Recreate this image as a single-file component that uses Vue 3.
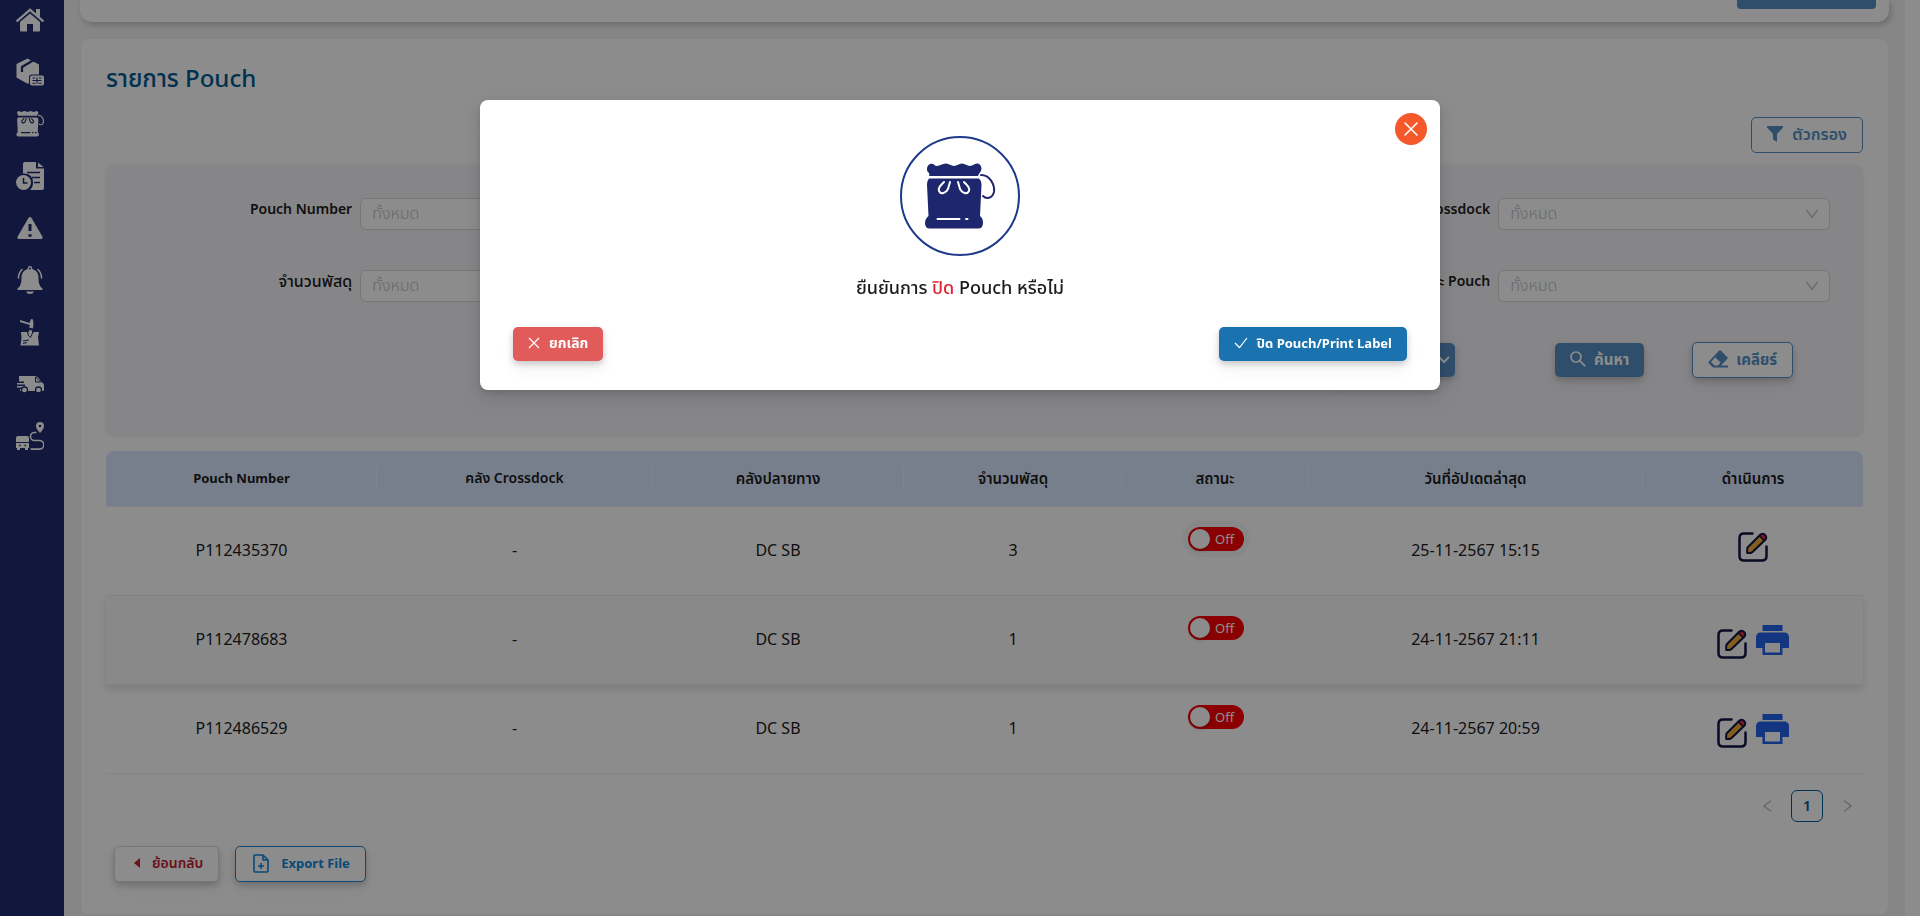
<script setup>
import { ref } from 'vue'

const columns = [
  { label: 'Pouch Number', width: 271, size: 'latin' },
  { label: 'คลัง Crossdock', width: 275, size: 'mixed' },
  { label: 'คลังปลายทาง', width: 252 },
  { label: 'จำนวนพัสดุ', width: 218 },
  { label: 'สถานะ', width: 186 },
  { label: 'วันที่อัปเดตล่าสุด', width: 335 },
  { label: 'ดำเนินการ', width: 220 },
]

const rows = ref([
  { id: 'P112435370', crossdock: '-', dest: 'DC SB', count: 3, updated: '25-11-2567 15:15', on: false, focus: true, print: false },
  { id: 'P112478683', crossdock: '-', dest: 'DC SB', count: 1, updated: '24-11-2567 21:11', on: false, hover: true, print: true },
  { id: 'P112486529', crossdock: '-', dest: 'DC SB', count: 1, updated: '24-11-2567 20:59', on: false, print: true },
])
</script>

<template>
  <div class="layout">
    <nav class="sidebar" aria-label="เมนูหลัก">
      <a href="#" aria-label="หน้าหลัก">
        <svg viewBox="0 0 28 28" fill="currentColor">
          <path d="M14 7.500 4 16V24.500q0 1 1 1h6v-7.500h6v7.500h6q1 0 1-1V16Z" />
          <path d="M1.200 14.800 14 3.800l12.800 11" fill="none" stroke="currentColor" stroke-width="2.200" stroke-linecap="round" />
          <path d="M20 3h4v8.500l-4-3.500Z" />
        </svg>
      </a>
      <a href="#" aria-label="พัสดุ">
        <svg viewBox="0 0 28 28" fill="currentColor">
          <path d="M11.500 0.500 0.500 6v13.500L11 25.500h2v-6q0-3 3-3h7V6.500Z" />
          <path d="M17 2.500 6 9v5" fill="none" stroke="#1f2a6f" stroke-width="2.200" />
          <rect x="14" y="17.500" width="14" height="10" rx="2" />
          <path d="M16.500 20h2.500M23 20h2.500M21 19.500v6M16.500 22.500h9M16.500 25.300h3M22.500 25.300h3" fill="none" stroke="#1f2a6f" stroke-width="1.100" />
        </svg>
      </a>
      <a href="#" aria-label="Pouch">
        <svg viewBox="0 0 72 70" fill="currentColor">
          <path d="M3 7C3 3 6 1 9 2c2 1 2 2 4 2 3 0 5-2.500 9-2.500 3 0 5 2.500 8 2.500s5-2.500 8-2.500 5 2.500 8 2.500 4-2.500 7-2.500 4.500 2.500 4.500 5.500c-.5 3-2.500 4-3.500 7H5c1-2 0-3-1-4S3 8 3 7Z" />
          <path d="M5 18h50q2.500 2 2.500 6L56 56q3 2 3 6 0 5-5 5H6q-5 0-5-5 0-4 3.500-6L3 24q0-4 2-6Z" />
          <path d="M58 13c9 0 14 10 12 19-2 6-8 6-10 3" fill="none" stroke="currentColor" stroke-width="3" stroke-linecap="round" />
          <path d="M20 21c-4 4-6 6-5 9 2 4 7 2 9-2l2-7M34 21l2 7c2 4 7 6 9 2 1-3-1-5-5-9M14 57h22M42 57h2M50 57h2" fill="none" stroke="#1f2a6f" stroke-width="3" stroke-linecap="round" />
        </svg>
      </a>
      <a href="#" aria-label="ประวัติ">
        <svg viewBox="0 0 28 28" fill="currentColor">
          <path d="M9 0h11v6.500h8V26q0 2-2 2H14q3-3 3-7.500 0-8.500-8.500-9H7V2q0-2 2-2Z" />
          <path d="M22 0.500 27.500 5H22Z" />
          <path d="M11 10.500h13M16 15.500h8M18 20.500h6" stroke="#1f2a6f" stroke-width="1.400" fill="none" />
          <circle cx="7.500" cy="20.500" r="8.500" fill="#1f2a6f" />
          <circle cx="7.500" cy="20.500" r="7.500" />
          <path d="M7.500 16v5h4" fill="none" stroke="#1f2a6f" stroke-width="1.500" />
        </svg>
      </a>
      <a href="#" aria-label="แจ้งปัญหา">
        <svg viewBox="0 0 28 28" fill="currentColor">
          <path d="M12.300 4.200q1.700-2.400 3.400 0l10.500 18q1.200 2.800-1.700 2.800h-21q-2.900 0-1.700-2.800Z" />
          <path d="M14 10v7M14 20.300v2.500" stroke="#1f2a6f" stroke-width="3" fill="none" />
        </svg>
      </a>
      <a href="#" aria-label="การแจ้งเตือน">
        <svg viewBox="0 0 28 28" fill="currentColor">
          <path d="M14 0q2.300 0 2.300 3 6.200 1.500 6.200 9 0 8 4 10.500v1.500h-25v-1.500q4-2.500 4-10.500 0-7.500 6.200-9 0-3 2.300-3Z" />
          <path d="M10 25.500h8q-1 2.500-4 2.500t-4-2.500Z" />
          <path d="M6 3.500Q2.500 7 2.500 12M22 3.500q3.500 3.500 3.500 8.500" fill="none" stroke="currentColor" stroke-width="1.600" stroke-linecap="round" />
          <circle cx="14" cy="2.600" r="1" fill="#1f2a6f" />
        </svg>
      </a>
      <a href="#" aria-label="พัสดุเสียหาย">
        <svg viewBox="0 0 28 28" fill="currentColor">
          <path d="m4 2 9.500 3L15 1l2 .5.500 4-.5 5-4-1 1-2.500L4 4Z" />
          <path d="M5 14h6l3 4 4-4h5l-1 5 1 8.500H4.500L5.500 20Z" />
          <path d="m12 13 3-2 2 3-2.500 5.500L12 17Z" stroke="#1f2a6f" stroke-width="1" />
          <path d="m7 23 6-1M7 25.500l4-1" stroke="#1f2a6f" stroke-width="1" />
        </svg>
      </a>
      <a href="#" aria-label="รถขนส่ง">
        <svg viewBox="0 0 28 28" fill="currentColor">
          <path d="M3 6h16q4 1 6 6 3 1 3 3v5q0 1-1 1H4v-2h5v-1.500H1v-1.500h8V14.500H1V13h7v-1.500H3Z" />
          <path d="M19.500 7v5h5Z" stroke="#1f2a6f" stroke-width="1" />
          <g stroke="#1f2a6f" stroke-width="1.300"><circle cx="8.500" cy="20" r="3" /><circle cx="22.500" cy="20" r="3" /></g>
        </svg>
      </a>
      <a href="#" aria-label="เส้นทาง">
        <svg viewBox="0 0 28 28" fill="currentColor">
          <path d="M2 14h9q2 0 2 2v4H0v-4q0-2 2-2ZM0 21h13v5h-1v2H9v-2H4v2H1v-2H0Z" />
          <path d="M24 0a4 4 0 0 1 4 4q0 3-4 7-4-4-4-7a4 4 0 0 1 4-4Z" />
          <circle cx="24" cy="4" r="1.300" fill="#1f2a6f" />
          <path d="M20.500 10.500h-2a3.800 3.800 0 0 0 0 8h5a4.300 4.300 0 0 1 0 8.600H14.500" fill="none" stroke="currentColor" stroke-width="1.600" />
          <path d="M3 23.500h1.500M8.500 23.500h1.500" stroke="#1f2a6f" stroke-width="1.400" />
        </svg>
      </a>
    </nav>

    <main class="content">
      <section class="top-card">
        <button type="button" class="btn solid top-action" aria-label="เพิ่ม"></button>
      </section>

      <section class="card">
        <h1>รายการ Pouch</h1>
        <div class="toolbar">
          <button type="button" class="btn outline">
            <svg width="16" height="16" viewBox="0 0 16 16" fill="currentColor"><path d="M0 0h16v1.500L10 8v8l-4-2.500V8L0 1.500Z" /></svg>
            ตัวกรอง
          </button>
        </div>

        <form class="filters" @submit.prevent>
          <div class="field">
            <label for="pouch-number" class="latin">Pouch Number</label>
            <input id="pouch-number" type="text" placeholder="ทั้งหมด" />
          </div>
          <div class="field last">
            <label for="crossdock" class="latin">คลัง Crossdock</label>
            <div class="select">
              <select id="crossdock"><option>ทั้งหมด</option></select>
              <svg width="12" height="10" viewBox="0 0 12 10" fill="none" stroke="currentColor" stroke-width="1.300"><path d="m0.500 1 5.500 7.500L11.500 1" /></svg>
            </div>
          </div>
          <div class="field">
            <label for="count">จำนวนพัสดุ</label>
            <input id="count" type="text" placeholder="ทั้งหมด" />
          </div>
          <div class="field last">
            <label for="status" class="latin">สถานะ Pouch</label>
            <div class="select">
              <select id="status"><option>ทั้งหมด</option></select>
              <svg width="12" height="10" viewBox="0 0 12 10" fill="none" stroke="currentColor" stroke-width="1.300"><path d="m0.500 1 5.500 7.500L11.500 1" /></svg>
            </div>
          </div>
          <div class="filter-actions">
            <button type="button" class="btn solid raised more" aria-label="ตัวเลือกเพิ่มเติม">
              <svg width="12" height="8" viewBox="0 0 12 8" fill="none" stroke="currentColor" stroke-width="2"><path d="m1 1 5 5 5-5" /></svg>
            </button>
            <button type="submit" class="btn solid raised">
              <svg width="16" height="16" viewBox="0 0 16 16" fill="none" stroke="currentColor" stroke-width="1.700"><circle cx="6" cy="6" r="5" /><path d="m9.600 9.600 5.600 5.600" /></svg>
              ค้นหา
            </button>
            <button type="reset" class="btn outline raised clear">
              <svg width="20" height="18" viewBox="0 0 20 18" fill="currentColor"><path d="M11 .8q1-1 2 0l6.400 6.400q.8.800 0 1.600L13 15.500h7V17.500H6q-1 0-1.500-.5L.8 13.200q-.8-.8 0-1.700Zm-3.800 6.500L3 12l3.500 3.500h3.500l2.500-3Z" fill-rule="evenodd" /></svg>
              เคลียร์
            </button>
          </div>
        </form>

        <table>
          <colgroup><col v-for="c in columns" :key="c.label" :style="{ width: c.width + 'px' }" /></colgroup>
          <thead>
            <tr><th v-for="c in columns" :key="c.label" scope="col" :class="c.size">{{ c.label }}</th></tr>
          </thead>
          <tbody>
            <tr v-for="r in rows" :key="r.id" :class="{ hover: r.hover }">
              <td>{{ r.id }}</td>
              <td>{{ r.crossdock }}</td>
              <td>{{ r.dest }}</td>
              <td>{{ r.count }}</td>
              <td class="status">
                <button type="button" role="switch" class="switch" :class="{ focus: r.focus }" :aria-checked="r.on" :aria-label="'สถานะ ' + r.id">
                  <i></i><span>Off</span>
                </button>
              </td>
              <td>{{ r.updated }}</td>
              <td>
                <div class="row-actions">
                  <button type="button" class="icon-btn edit" :aria-label="'แก้ไข ' + r.id">
                    <svg width="30" height="30" viewBox="0 0 30 30" fill="none" stroke-width="2.500" stroke-linecap="round" stroke-linejoin="round">
                      <path d="M14.500 1.500H6Q1.500 1.500 1.500 6v18q0 4.500 4.500 4.500h18q4.500 0 4.500-4.500v-9.500" stroke="#101544" />
                      <path d="M9.500 15.500 22 3q2.500-2.500 5 0t0 5L14.500 20q-1 1-2.500 1H9.200q-.2-3.500.3-5.500Z" fill="#f0ab3c" stroke="#101544" stroke-width="2" />
                      <path d="m21.500 4 1.500-1.500q2-1.500 4 .5t.5 4L26 8.500Z" fill="#e02b3d" stroke="#101544" stroke-width="1.600" />
                    </svg>
                  </button>
                  <button v-if="r.print" type="button" class="icon-btn print" :aria-label="'พิมพ์ ' + r.id">
                    <svg width="33" height="30" viewBox="0 0 33 30" fill="#2563eb">
                      <path d="M6.500 0h20v6h-20Z" />
                      <path d="M5 7.500h23q5 0 5 5V23h-6.500v7h-20v-7H0V12.500q0-5 5-5ZM9 18v9.500h15V18Z" fill-rule="evenodd" />
                    </svg>
                  </button>
                </div>
              </td>
            </tr>
          </tbody>
        </table>

        <nav class="pager" aria-label="หน้า">
          <button type="button" aria-label="ก่อนหน้า"><svg width="9" height="12" viewBox="0 0 9 12" fill="none" stroke="currentColor" stroke-width="1.400"><path d="M8 .8 1 6l7 5.200" /></svg></button>
          <button type="button" class="current" aria-current="page">1</button>
          <button type="button" aria-label="ถัดไป"><svg width="9" height="12" viewBox="0 0 9 12" fill="none" stroke="currentColor" stroke-width="1.400"><path d="M1 .8 8 6l-7 5.200" /></svg></button>
        </nav>

        <div class="footer-actions">
          <button type="button" class="btn back raised">
            <svg width="6" height="10" viewBox="0 0 6 10" fill="currentColor"><path d="M6 0v10L0 5Z" /></svg>
            ย้อนกลับ
          </button>
          <button type="button" class="btn export raised">
            <svg width="16" height="19" viewBox="0 0 16 19" fill="none" stroke="currentColor" stroke-width="1.600" stroke-linejoin="round"><path d="M10 1H2Q1 1 1 2v15q0 1 1 1h12q1 0 1-1V6Z" /><path d="M10 1v5h5" /><path d="M8 9v6M5 12h6" /></svg>
            Export File
          </button>
        </div>
      </section>
    </main>

    <div class="mask">
      <div class="modal" role="dialog" aria-modal="true" aria-labelledby="dialog-title">
        <button type="button" class="close" aria-label="ปิด">
          <svg width="14" height="14" viewBox="0 0 14 14" fill="none" stroke="currentColor" stroke-width="1.600" stroke-linecap="round"><path d="m1 1 12 12M13 1 1 13" /></svg>
        </button>
        <div class="emblem">
          <svg width="72" height="68" viewBox="0 0 72 68" fill="#1e266d">
            <path d="M3 7C3 3 6 1 9 2c2 1 2 2 4 2 3 0 5-2.500 9-2.500 3 0 5 2.500 8 2.500s5-2.500 8-2.500 5 2.500 8 2.500 4-2.500 7-2.500 4.500 2.500 4.500 5.500c-.5 3-2.500 4-3.500 7H5c1-2 0-3-1-4S3 8 3 7Z" />
            <path d="M5 16.500h50q2.500 2 2.500 6L56 54q3 2 3 7 0 5.500-5 5.500H6q-5 0-5-5.500 0-4 3.500-7L3 22.500q0-4 2-6Z" />
            <path d="M57 13c9 0 14 10 13 17-2 7-8 7-11 4" fill="none" stroke="#1e266d" stroke-width="2" stroke-linecap="round" />
            <path d="M20 20c-4 4-6 6-5 9 2 4 7 2 9-2l2-7M34 20l2 7c2 4 7 6 9 2 1-3-1-5-5-9M13.500 57h22M42 57h1.500" fill="none" stroke="#fff" stroke-width="2" stroke-linecap="round" />
          </svg>
        </div>
        <h2 id="dialog-title">ยืนยันการ <em>ปิด</em> Pouch หรือไม่</h2>
        <div class="modal-actions">
          <button type="button" class="btn danger raised">
            <svg width="12" height="12" viewBox="0 0 12 12" fill="none" stroke="currentColor" stroke-width="1.200"><path d="m1 1 10 10M11 1 1 11" /></svg>
            ยกเลิก
          </button>
          <button type="button" class="btn primary raised">
            <svg width="14" height="12" viewBox="0 0 14 12" fill="none" stroke="currentColor" stroke-width="1.200"><path d="m1 6 4.500 4.500L13 1" /></svg>
            ปิด Pouch/Print Label
          </button>
        </div>
      </div>
    </div>
  </div>
</template>

<style>
body { margin: 0; background: #fff; }
</style>

<style scoped>
.layout, .layout * { box-sizing: border-box; }
.layout {
  display: flex;
  min-height: 100vh;
  font-family: "Noto Sans", "Noto Sans Thai", "Liberation Sans", sans-serif;
  font-size: 14px;
  line-height: 20px;
  color: #1c1c1c;
}
button, input, select { font: inherit; color: inherit; margin: 0; }
svg { display: block; flex: none; }

.sidebar {
  display: flex;
  flex-direction: column;
  align-items: center;
  gap: 24px;
  width: 64px;
  flex: none;
  padding: 6px 4px 0 0;
  background: #1f2a6f;
  color: #fff;
}
.sidebar a { color: inherit; }
.sidebar svg { width: 28px; height: 28px; }

.content {
  flex: 1;
  min-width: 0;
  padding: 0 16px 1px;
  margin-right: 15px;
  background: #f4f4f4;
}
.top-card {
  display: flex;
  justify-content: flex-end;
  height: 22px;
  padding: 0 13px;
  border-radius: 0 0 12px 12px;
  background: #fff;
  box-shadow: 2px 3px 6px rgba(0, 0, 0, .2);
}
.btn.top-action { width: 139px; height: 9px; padding: 0; border-radius: 0 0 4px 4px; }
.card {
  margin: 16px 0 0;
  padding: 23px 25px 32px;
  border: 1px solid #f0f0f0;
  border-radius: 8px;
  background: #fff;
}
h1 { margin: 0; font-size: 24px; font-weight: 500; line-height: 32px; color: #005b91; }
.toolbar { display: flex; justify-content: flex-end; margin: 23px 0 12px; }

.btn {
  display: inline-flex;
  align-items: center;
  justify-content: center;
  gap: 9px;
  height: 36px;
  padding: 0 15px 2px;
  border: 1px solid transparent;
  border-radius: 5px;
  background: #fff;
  font-weight: 600;
  white-space: nowrap;
}
.raised { box-shadow: 0 3px 6px rgba(0, 0, 0, .18), 0 8px 16px rgba(0, 0, 0, .06); }
.outline { border-color: #558fc4; color: #558fc4; font-size: 16px; }
.solid { height: 34px; border: 0; padding: 0 15px 2px; gap: 8px; background: #558fc4; color: #fff; font-size: 15px; font-weight: 700; }
.clear { font-size: 15px; gap: 8px; font-weight: 700; }

.filters {
  display: grid;
  grid-template-columns: repeat(3, minmax(0, 1fr));
  row-gap: 40px;
  padding: 33px 25px 57px;
  border-radius: 8px;
  background: #f4f4f8;
  box-shadow: 0 1px 3px rgba(0, 0, 0, .1);
}
.field {
  grid-column: 1;
  display: grid;
  grid-template-columns: 2fr 3fr;
  column-gap: 8px;
  padding-right: 8px;
}
.field.last { grid-column: 3; }
.field label { padding-top: 1px; text-align: right; font-size: 16px; font-weight: 500; }
.field label.latin { font-size: 14px; font-weight: 600; }
.field input, .field select {
  width: 100%;
  height: 32px;
  padding: 0 11px 2px;
  border: 1px solid #d9d9d9;
  border-radius: 6px;
  background: #fff;
  color: #bfbfbf;
  font-size: 16px;
  font-weight: 300;
  appearance: none;
}
.field input::placeholder { color: #bfbfbf; opacity: 1; }
.select { position: relative; }
.select svg { position: absolute; right: 12px; top: 11px; color: #bfbfbf; pointer-events: none; }
.filter-actions {
  grid-column: 1 / -1;
  display: flex;
  align-items: center;
  justify-content: flex-end;
  gap: 48px;
  padding-right: 45px;
}
.more { width: 120px; justify-content: flex-end; padding: 0 5px; margin-right: 52px; }

table { width: 100%; margin-top: 16px; table-layout: fixed; border-collapse: separate; border-spacing: 0; }
th {
  position: relative;
  height: 56px;
  padding: 0 0 2px;
  background: #dae7ff;
  border-bottom: 1px solid #f0f0f0;
  font-size: 15px;
  font-weight: 600;
}
th.latin { font-size: 13px; font-weight: 700; }
th.mixed { font-size: 14px; }
th:first-child { border-top-left-radius: 8px; }
th:last-child { border-top-right-radius: 8px; }
th:not(:last-child)::after { content: ""; position: absolute; right: 0; top: 16px; height: 24px; width: 1px; background: #e9eef8; }
td { height: 89px; padding: 0 0 2px; border-bottom: 1px solid #f0f0f0; text-align: center; font-size: 16px; }
td:last-child { padding: 0; }
tr.hover { box-shadow: 0 4px 8px rgba(0, 0, 0, .12); }
tr.hover td { background: #fafafa; }
td.status { vertical-align: top; padding: 20px 0 0 2px; line-height: 20px; }
.switch {
  display: inline-flex;
  align-items: center;
  gap: 5px;
  width: 56px;
  height: 24px;
  padding: 2px;
  border: 0;
  border-radius: 12px;
  background: #fb0007;
  color: #fff;
  font-size: 13px;
}
.switch i { width: 20px; height: 20px; border-radius: 50%; background: #fff; box-shadow: 0 2px 4px rgba(0, 35, 11, .2); }
.switch.focus { box-shadow: 0 0 0 6px rgba(0, 60, 40, .04); }
.row-actions { display: flex; align-items: flex-end; justify-content: center; gap: 9px; }
.icon-btn { padding: 0; border: 0; background: none; }
.edit { padding-bottom: 8px; }
.print { padding: 12px 0; }

.pager { display: flex; justify-content: flex-end; gap: 8px; margin-top: 16px; }
.pager button {
  display: grid;
  place-items: center;
  width: 32px;
  height: 32px;
  padding: 0;
  border: 1px solid transparent;
  border-radius: 6px;
  background: none;
  color: #bfbfbf;
}
.pager .current { border-color: #005b96; color: #005b96; font-weight: 600; }
.footer-actions { display: flex; gap: 16px; margin: 24px 0 0 8px; }
.back { border-color: #d9d9d9; color: #c4202f; padding: 0 15px 2px 19px; gap: 12px; }
.export { border-color: #1486d8; color: #1486d8; padding: 0 15px 2px 17px; gap: 12px; font-size: 13px; font-weight: 700; }

.mask {
  position: fixed;
  inset: 0;
  display: flex;
  align-items: flex-start;
  justify-content: center;
  padding-top: 100px;
  background: rgba(0, 0, 0, .45);
}
.modal {
  position: relative;
  width: 50%;
  padding: 36px 33px 29px;
  border-radius: 8px;
  background: #fff;
  box-shadow: 0 6px 16px rgba(0, 0, 0, .08), 0 3px 6px rgba(0, 0, 0, .12), 0 9px 28px 8px rgba(0, 0, 0, .05);
}
.close {
  position: absolute;
  top: 13px;
  right: 13px;
  display: grid;
  place-items: center;
  width: 32px;
  height: 32px;
  padding: 0;
  border: 0;
  border-radius: 50%;
  background: #f4582b;
  color: #fff;
}
.emblem {
  display: grid;
  place-items: center;
  width: 120px;
  height: 120px;
  margin: 0 auto;
  border: 2px solid #1e3a8a;
  border-radius: 50%;
}
h2 { margin: 18px 0 27px; text-align: center; font-size: 18px; font-weight: 500; line-height: 26px; }
h2 em { font-style: normal; color: #e02430; }
.modal-actions { display: flex; justify-content: space-between; }
.modal-actions .btn { height: 34px; border: 0; color: #fff; font-weight: 700; }
.danger { background: #e25b5b; }
.primary { background: #1a72ae; font-size: 13px; }
</style>
